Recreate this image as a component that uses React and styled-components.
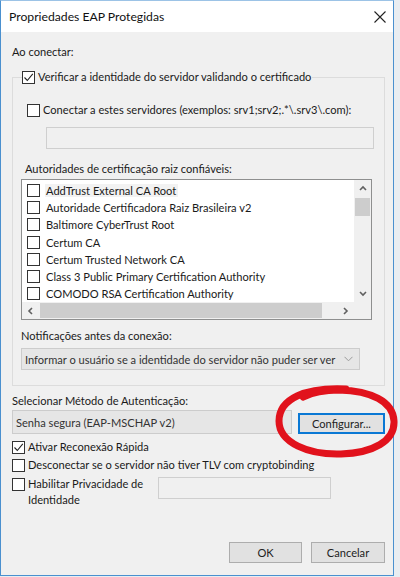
import React from 'react'
import styled, { createGlobalStyle } from 'styled-components'

const GlobalStyle = createGlobalStyle`
  html, body {
    margin: 0;
    padding: 0;
    background: #e9edf1;
  }
  body {
    font-family: Lato, "Noto Sans", sans-serif;
    font-size: 11.1px;
    color: #1a1a1a;
  }
`

const authorities = [
  'AddTrust External CA Root',
  'Autoridade Certificadora Raiz Brasileira v2',
  'Baltimore CyberTrust Root',
  'Certum CA',
  'Certum Trusted Network CA',
  'Class 3 Public Primary Certification Authority',
  'COMODO RSA Certification Authority',
]

const Check = ({ checked }) => (
  <Box>
    {checked && (
      <svg width="11" height="11" viewBox="0 0 11 11">
        <path d="M1.5 5.5 L4.3 8.5 L9.8 1.8" fill="none" stroke="#222" strokeWidth="1.1" />
      </svg>
    )}
  </Box>
)

const Chevron = ({ dir }) => {
  const d = {
    up: 'M1 5 L4 2 L7 5',
    down: 'M1 2 L4 5 L7 2',
    left: 'M5 1 L2 4 L5 7',
    right: 'M2 1 L5 4 L2 7',
  }[dir]
  return (
    <svg width="8" height="8" viewBox="0 0 8 8">
      <path d={d} fill="none" stroke="#606060" strokeWidth="1.6" />
    </svg>
  )
}

export default function App() {
  return (
    <Page>
      <GlobalStyle />
      <Window>
        <TitleBar>
          <span>Propriedades EAP Protegidas</span>
          <svg width="12" height="12" viewBox="0 0 12 12">
            <path d="M0.5 0.5 L11.5 11.5 M11.5 0.5 L0.5 11.5" stroke="#222" strokeWidth="1.1" />
          </svg>
        </TitleBar>
        <Body>
          <Label>Ao conectar:</Label>
          <Group>
            <Legend>
              <CheckRow>
                <Check checked />
                <span>Verificar a identidade do servidor validando o certificado</span>
              </CheckRow>
            </Legend>
            <CheckRow style={{ marginTop: 17, marginLeft: 14 }}>
              <Check />
              <span>Conectar a estes servidores (exemplos: srv1;srv2;.*\.srv3\.com):</span>
            </CheckRow>
            <TextBox $left={33} $width={326} $top={9} />
            <Label $left={12} $top={12}>Autoridades de certificação raiz confiáveis:</Label>
            <ListBox>
              <ListBody>
                <Items>
                  {authorities.map((a, i) => (
                    <Item key={a}>
                      <Check />
                      <ItemText $focus={i === 0}>{a}</ItemText>
                    </Item>
                  ))}
                </Items>
                <VScroll>
                  <ArrowCell><Chevron dir="up" /></ArrowCell>
                  <VTrack>
                    <VThumb />
                  </VTrack>
                  <ArrowCell><Chevron dir="down" /></ArrowCell>
                </VScroll>
              </ListBody>
              <HScroll>
                <HArrow><Chevron dir="left" /></HArrow>
                <HTrack>
                  <HThumb />
                </HTrack>
                <HArrow><Chevron dir="right" /></HArrow>
                <Corner />
              </HScroll>
            </ListBox>
            <Label $left={8} $top={8}>Notificações antes da conexão:</Label>
            <Dropdown>
              <span>Informar o usuário se a identidade do servidor não puder ser ver</span>
              <svg width="9" height="6" viewBox="0 0 9 6">
                <path d="M0.5 0.8 L4.5 4.8 L8.5 0.8" fill="none" stroke="#9a9a9a" strokeWidth="1" />
              </svg>
            </Dropdown>
          </Group>
          <Label $top={7}>Selecionar Método de Autenticação:</Label>
          <MethodRow>
            <Combo>Senha segura (EAP-MSCHAP v2)</Combo>
            <Button $focused $width={87}>Configurar...</Button>
          </MethodRow>
          <CheckRow style={{ marginTop: 5 }}>
            <Check checked />
            <span>Ativar Reconexão Rápida</span>
          </CheckRow>
          <CheckRow style={{ marginTop: 2 }}>
            <Check />
            <span>Desconectar se o servidor não tiver TLV com cryptobinding</span>
          </CheckRow>
          <PrivacyRow>
            <CheckRow $top $width={146}>
              <Check />
              <span>Habilitar Privacidade de<br />Identidade</span>
            </CheckRow>
            <TextBox $width={171} $top={1} />
          </PrivacyRow>
          <Footer>
            <Button $width={73}>OK</Button>
            <Button $width={74}>Cancelar</Button>
          </Footer>
        </Body>
      </Window>
      <Circle width="126" height="76" viewBox="0 0 126 76">
        <path
          d="M72 5 C31 3 5 15 5 37 C5 59 35 71 67 70 C99 69 121 57 120 37 C119 17 97 7 65 6 C51 6 37 9 29 13"
          fill="none"
          stroke="#e1121c"
          strokeWidth="7"
          strokeLinecap="round"
        />
      </Circle>
    </Page>
  )
}

const Page = styled.div`
  position: relative;
  width: 400px;
  height: 577px;
  overflow: hidden;
`

const Window = styled.div`
  width: 392px;
  height: 574px;
  border: 1px solid #4a90cf;
  border-top-color: #9cc3e6;
  display: flex;
  flex-direction: column;
  background: #f0f0f0;
`

const TitleBar = styled.div`
  height: 31px;
  flex: none;
  background: #fff;
  display: flex;
  align-items: center;
  justify-content: space-between;
  padding: 0 7px 0 8px;
  font-size: 12.2px;
  color: #111;
`

const Body = styled.div`
  flex: 1;
  display: flex;
  flex-direction: column;
  padding: 12px 8px 12px 11px;
`

const Label = styled.div`
  line-height: 16px;
  margin-left: ${p => p.$left || 0}px;
  margin-top: ${p => p.$top || 0}px;
  white-space: nowrap;
`

const Group = styled.fieldset`
  margin: 9px 0 0 0;
  padding: 0 0 15px 0;
  border: 1px solid #dcdcdc;
  min-width: 0;
`

const Legend = styled.legend`
  margin-left: 9px;
  padding: 0 1px 0 0;
`

const CheckRow = styled.div`
  display: flex;
  align-items: ${p => (p.$top ? 'flex-start' : 'center')};
  gap: 3px;
  line-height: 16px;
  white-space: nowrap;
  ${p => p.$width && `width: ${p.$width}px; flex: none;`}
  ${p => p.$top && 'span:first-child { margin-top: 2px; }'}
`

const Box = styled.span`
  flex: none;
  width: 11px;
  height: 11px;
  border: 1px solid #333;
  background: #fff;
  display: flex;
  align-items: center;
  justify-content: center;
`

const TextBox = styled.div`
  margin-left: ${p => p.$left || 0}px;
  margin-top: ${p => p.$top || 0}px;
  width: ${p => p.$width}px;
  height: 20px;
  border: 1px solid #cfcfcf;
  background: #f0f0f0;
  flex: none;
`

const ListBox = styled.div`
  margin: 2px 0 0 8px;
  width: 349px;
  height: 139px;
  border: 1px solid #8e8f8f;
  background: #fff;
  display: flex;
  flex-direction: column;
`

const ListBody = styled.div`
  flex: 1;
  display: flex;
`

const Items = styled.div`
  flex: 1;
  padding: 2px 0 0 5px;
  overflow: hidden;
`

const Item = styled.div`
  display: flex;
  align-items: center;
  gap: 5px;
  height: 17.2px;
  white-space: nowrap;
`

const ItemText = styled.span`
  padding: 0 2px 0 1px;
  background: ${p => (p.$focus ? '#f2f2f2' : 'transparent')};
`

const VScroll = styled.div`
  width: 17px;
  display: flex;
  flex-direction: column;
  background: #f0f0f0;
`

const ArrowCell = styled.div`
  height: 17px;
  display: flex;
  align-items: center;
  justify-content: center;
`

const VTrack = styled.div`
  flex: 1;
  padding: 0 1px;
`

const VThumb = styled.div`
  margin-top: 1px;
  height: 18px;
  background: #cdcdcd;
`

const HScroll = styled.div`
  height: 17px;
  display: flex;
  background: #f0f0f0;
`

const HArrow = styled.div`
  width: 17px;
  display: flex;
  align-items: center;
  justify-content: center;
`

const HTrack = styled.div`
  flex: 1;
  padding: 1px 0;
  display: flex;
`

const HThumb = styled.div`
  width: 282px;
  background: #cdcdcd;
  margin-left: 1px;
`

const Corner = styled.div`
  width: 17px;
  background: #f0f0f0;
`

const Dropdown = styled.div`
  margin: 4px 0 0 8px;
  box-sizing: border-box;
  width: 339px;
  height: 22px;
  border: 1px solid #cccccc;
  background: #e6e6e6;
  display: flex;
  align-items: center;
  justify-content: space-between;
  padding: 0 6px 0 3px;
  color: #333;
  white-space: nowrap;
  overflow: hidden;
`

const MethodRow = styled.div`
  display: flex;
  align-items: flex-end;
  gap: 6px;
  margin-top: 1px;
`

const Combo = styled.div`
  width: 280px;
  height: 24px;
  box-sizing: border-box;
  border: 1px solid #cccccc;
  background: #e6e6e6;
  display: flex;
  align-items: center;
  padding-left: 3px;
  color: #333;
`

const Button = styled.div`
  width: ${p => p.$width}px;
  height: 21px;
  box-sizing: border-box;
  border: ${p => (p.$focused ? '2px solid #0a78d4' : '1px solid #adadad')};
  background: #e1e1e1;
  display: flex;
  align-items: center;
  justify-content: center;
  color: #222;
`

const PrivacyRow = styled.div`
  display: flex;
  align-items: flex-start;
  gap: 0;
  margin-top: 3px;
`

const Footer = styled.div`
  margin-top: auto;
  display: flex;
  justify-content: flex-end;
  gap: 9px;
`

const Circle = styled.svg`
  position: absolute;
  left: 274px;
  top: 384px;
  pointer-events: none;
`
